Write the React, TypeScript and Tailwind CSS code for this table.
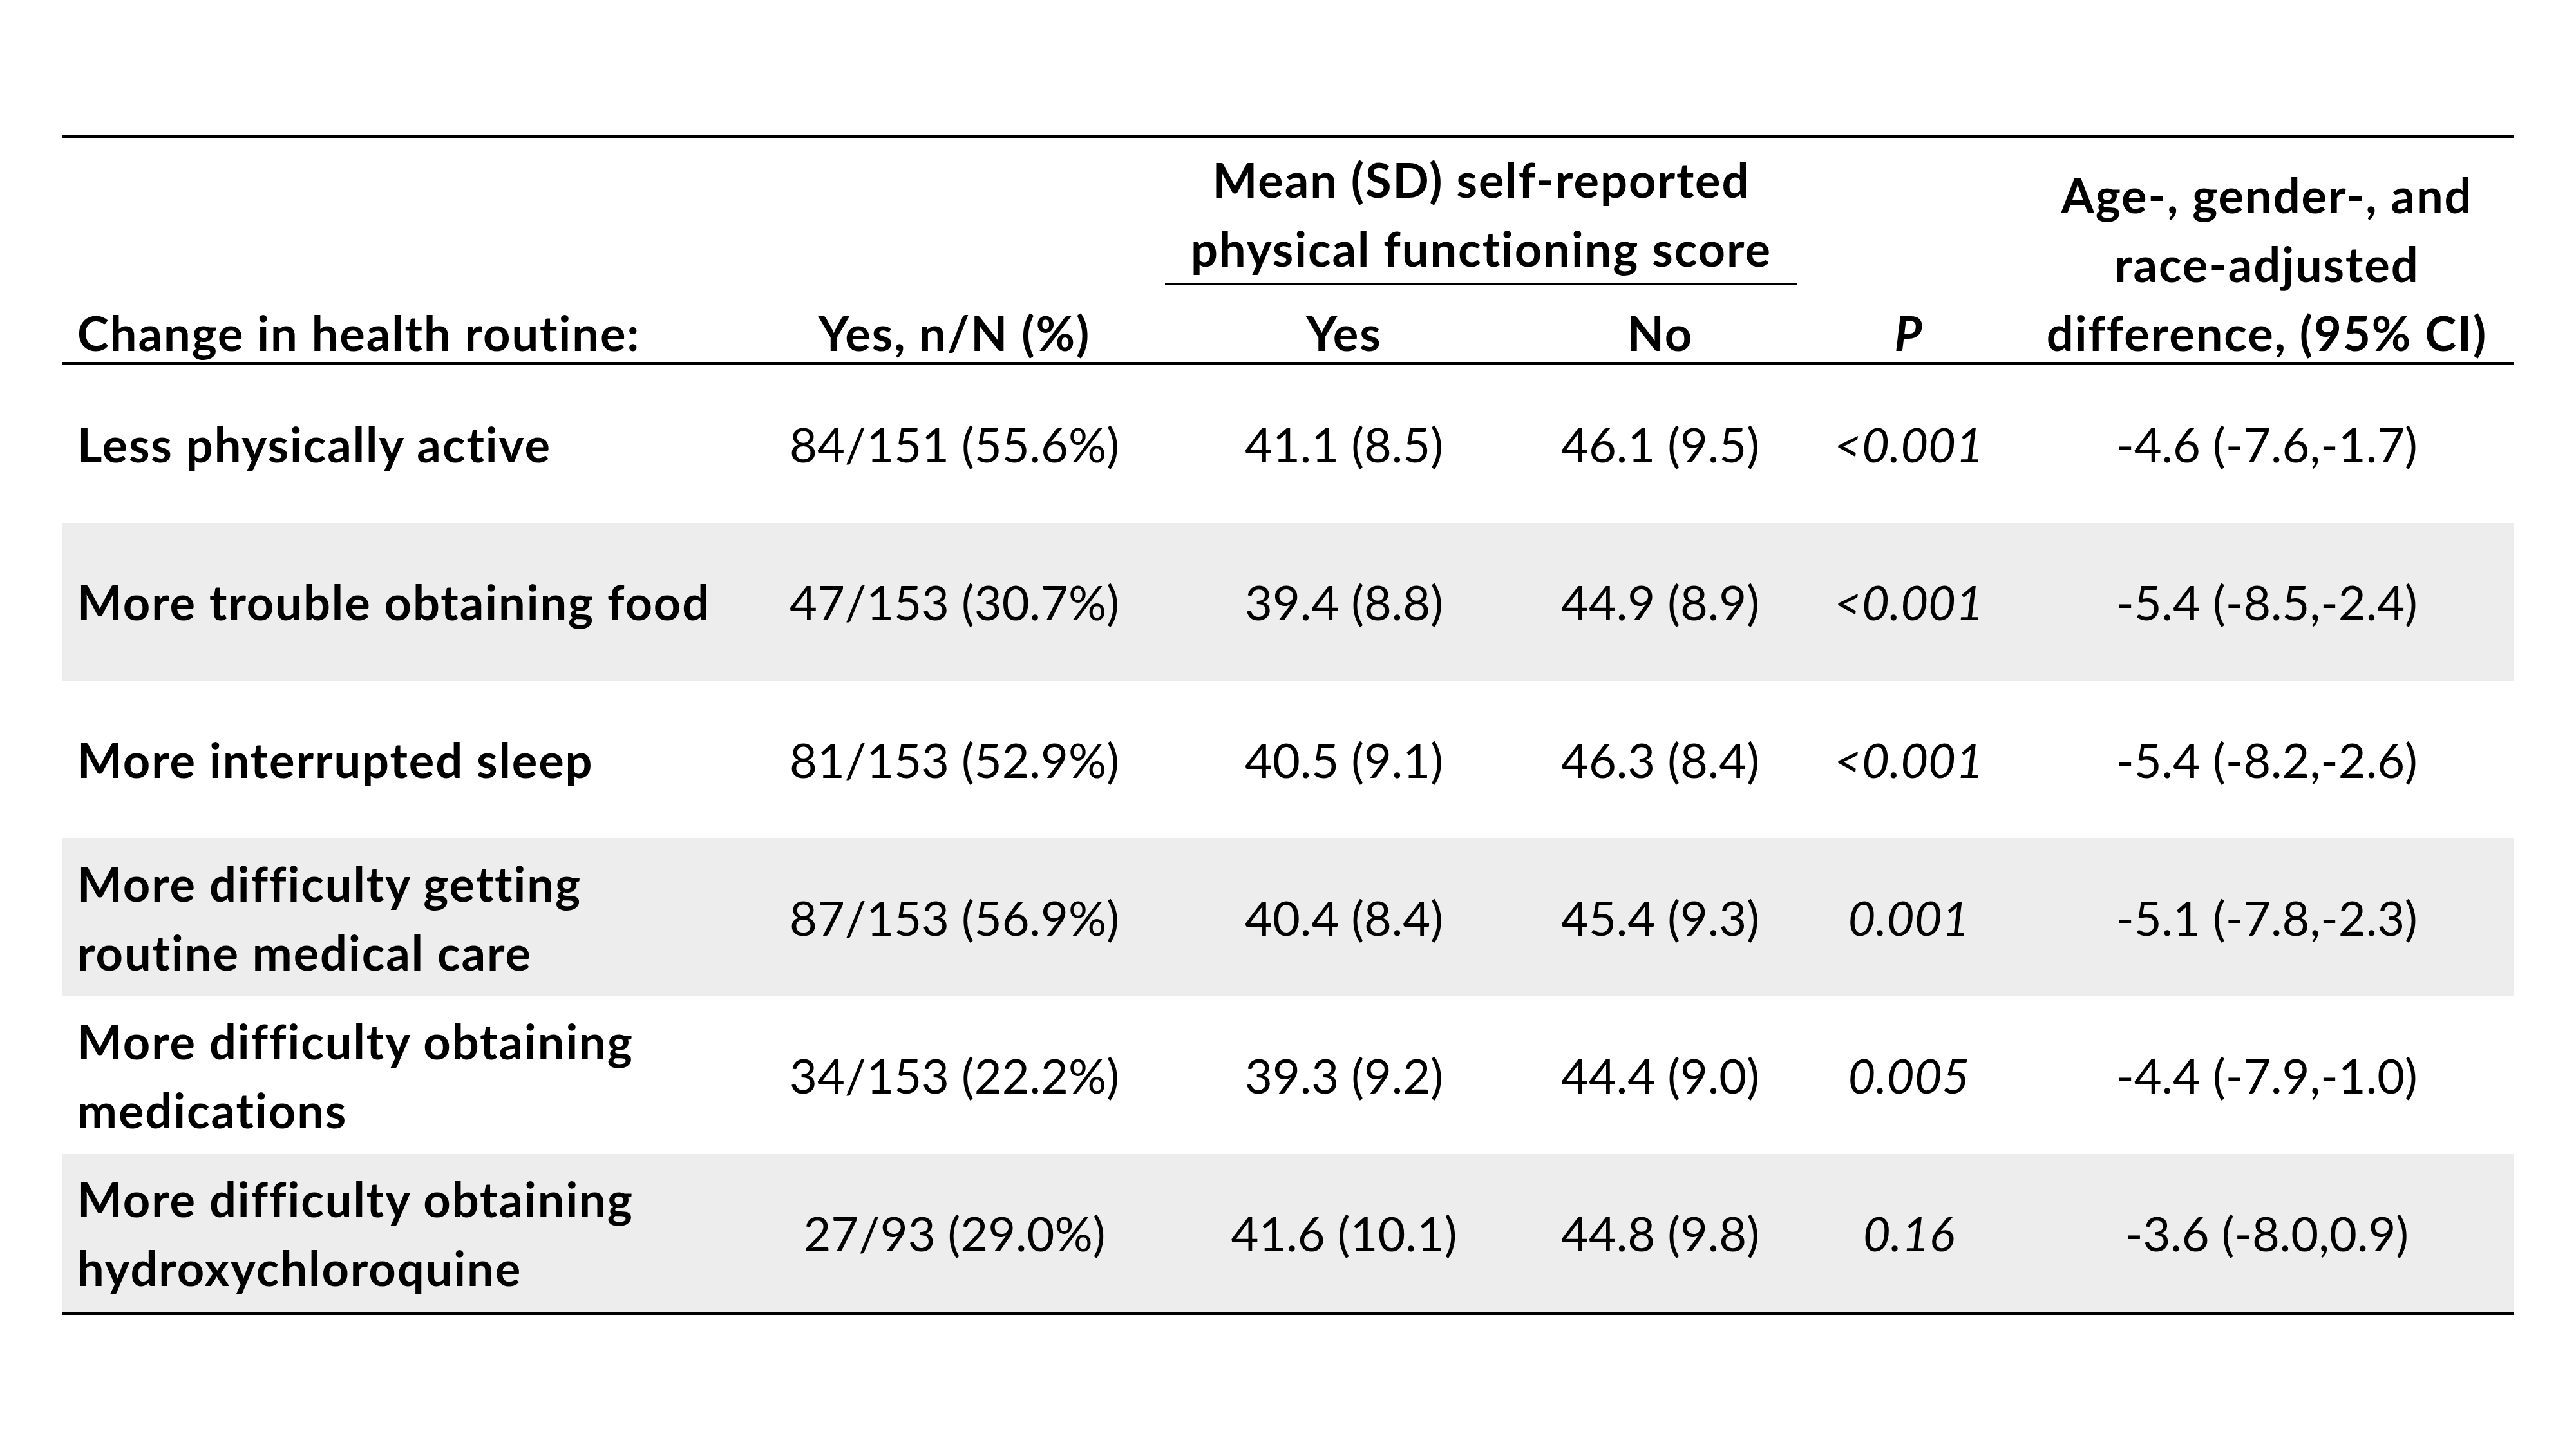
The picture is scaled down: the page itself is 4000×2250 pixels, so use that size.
const rows = [
  { label: ['Less physically active'], yes: '84/151 (55.6%)', m1: '41.1 (8.5)', m2: '46.1 (9.5)', p: '<0.001', diff: '-4.6 (-7.6,-1.7)' },
  { label: ['More trouble obtaining food'], yes: '47/153 (30.7%)', m1: '39.4 (8.8)', m2: '44.9 (8.9)', p: '<0.001', diff: '-5.4 (-8.5,-2.4)' },
  { label: ['More interrupted sleep'], yes: '81/153 (52.9%)', m1: '40.5 (9.1)', m2: '46.3 (8.4)', p: '<0.001', diff: '-5.4 (-8.2,-2.6)' },
  { label: ['More difficulty getting', 'routine medical care'], yes: '87/153 (56.9%)', m1: '40.4 (8.4)', m2: '45.4 (9.3)', p: '0.001', diff: '-5.1 (-7.8,-2.3)' },
  { label: ['More difficulty obtaining', 'medications'], yes: '34/153 (22.2%)', m1: '39.3 (9.2)', m2: '44.4 (9.0)', p: '0.005', diff: '-4.4 (-7.9,-1.0)' },
  { label: ['More difficulty obtaining', 'hydroxychloroquine'], yes: '27/93 (29.0%)', m1: '41.6 (10.1)', m2: '44.8 (9.8)', p: '0.16', diff: '-3.6 (-8.0,0.9)' },
];

function App() {
  return (
    <div className="min-h-screen w-[4000px] h-[2250px] bg-white pt-[210px] pl-[97px] font-['Lato',sans-serif] text-black text-[74px] leading-[107px]">
      <div className="w-[3806px]">
        {/* Header */}
        <div className="flex h-[357px] border-y-[5px] border-black font-bold tracking-[0.026em]">
          <div className="w-[1058px] pl-[23px] flex items-end">
            <div className="-mb-[8px]">Change in health routine:</div>
          </div>
          <div className="w-[654px] flex items-end justify-center">
            <div className="-mb-[8px]">Yes, n/N (%)</div>
          </div>
          <div className="w-[982px] flex flex-col justify-end">
            <div className="text-center -mb-[8px]">
              Mean (SD) self-reported
              <br />
              physical functioning score
            </div>
            <div className="h-[3px] bg-black mt-[8px] mb-[21px]"></div>
            <div className="flex -mb-[8px]">
              <div className="w-[556px] text-center">Yes</div>
              <div className="w-[426px] text-center">No</div>
            </div>
          </div>
          <div className="w-[346px] flex items-end justify-center italic">
            <div className="-mb-[8px]">P</div>
          </div>
          <div className="w-[766px] flex items-end justify-center text-center">
            <div className="-mb-[8px]">
              Age-, gender-, and
              <br />
              race-adjusted
              <br />
              difference, (95% CI)
            </div>
          </div>
        </div>

        {/* Body */}
        <div className="border-b-[5px] border-black">
          {rows.map((r, i) => (
            <div key={i} className={`flex h-[245px] items-center ${i % 2 === 1 ? 'bg-[#ededed]' : 'bg-white'}`}>
              <div className="w-[1058px] pl-[23px] font-bold tracking-[0.026em]">
                {r.label.map((l, j) => (
                  <div key={j}>{l}</div>
                ))}
              </div>
              <div className="w-[654px] text-center">{r.yes}</div>
              <div className="w-[556px] text-center">{r.m1}</div>
              <div className="w-[426px] text-center">{r.m2}</div>
              <div className="w-[346px] text-center italic">{r.p}</div>
              <div className="w-[766px] text-center">{r.diff}</div>
            </div>
          ))}
        </div>
      </div>
    </div>
  );
}

export default App;
